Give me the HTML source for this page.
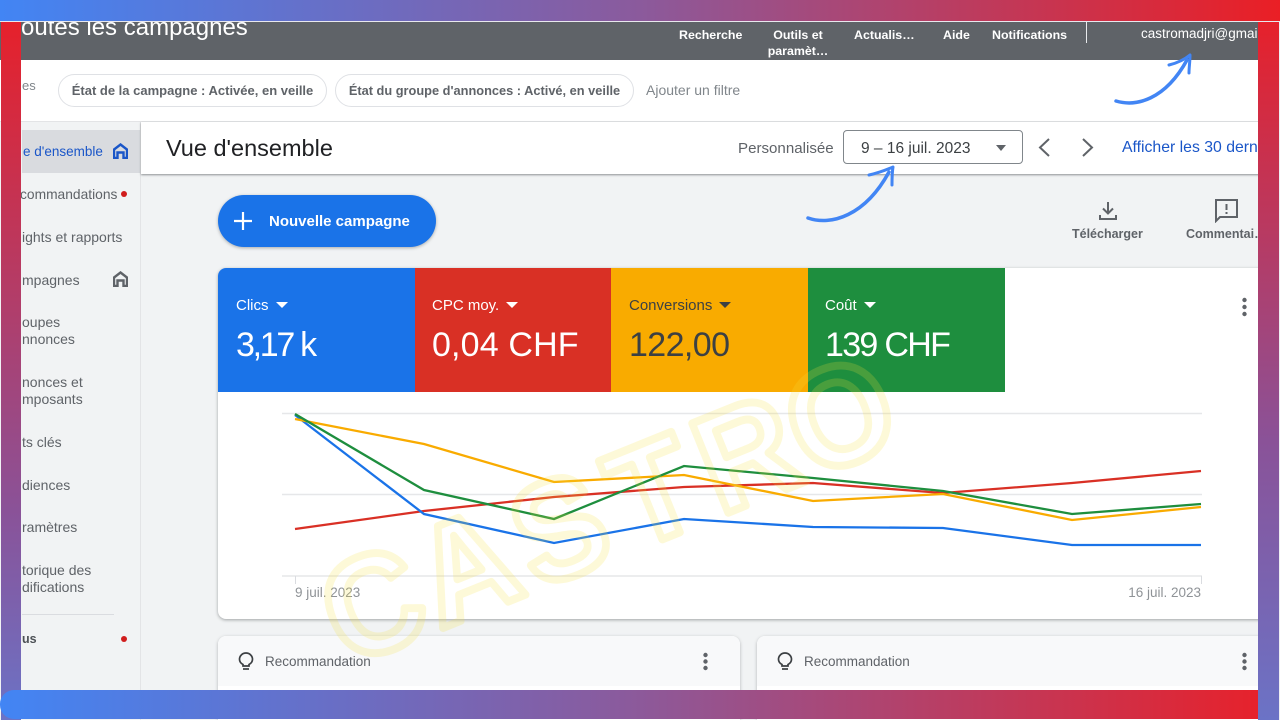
<!DOCTYPE html>
<html lang="fr"><head><meta charset="utf-8"><title>Vue d'ensemble</title>
<style>
html,body{margin:0;padding:0;width:1280px;height:720px;overflow:hidden;background:#fff}
body{position:relative;font-family:"Liberation Sans",sans-serif;color:#3c4043}
.a{position:absolute;white-space:nowrap}
.b{font-weight:bold}
.nav{font-size:14px;color:#5f6368;line-height:17px}
.hd{color:#fff;font-weight:bold;font-size:12.4px;line-height:16px;text-align:center}
.chip{position:absolute;top:74px;height:31px;border:1px solid #dfe1e5;border-radius:17px;background:#fff;font-size:13px;font-weight:bold;color:#5f6368;line-height:31px;text-align:center;white-space:nowrap}
.tile{position:absolute;top:268px;height:124px;width:197px}
.tl{position:absolute;left:18px;top:28.500px;font-size:15px;line-height:18px;white-space:nowrap}
.tv{position:absolute;left:18px;top:57px;font-size:34px;line-height:40px;white-space:nowrap}
.tri{display:inline-block;width:0;height:0;border-left:6px solid transparent;border-right:6px solid transparent;border-top:6px solid currentColor;margin-left:7px;vertical-align:2px}
</style></head><body>

<!-- header -->
<div class="a" style="left:0;top:21px;width:1280px;height:39px;background:#5f6368"></div>
<div class="a" style="left:9px;top:12px;font-size:24px;line-height:32px;color:#fff">Toutes les campagnes</div>
<div class="a hd" style="left:679px;top:27px">Recherche</div>
<div class="a hd" style="left:762px;top:27px;width:72px">Outils et<br>paramèt…</div>
<div class="a hd" style="left:854px;top:27px">Actualis…</div>
<div class="a hd" style="left:943px;top:27px">Aide</div>
<div class="a hd" style="left:992px;top:27px">Notifications</div>
<div class="a" style="left:1086px;top:21px;width:1px;height:22px;background:#e8eaed"></div>
<div class="a" style="left:1141px;top:26px;font-size:13.500px;line-height:16px;color:#fff">castromadjri@gmail.com</div>

<!-- filter bar -->
<div class="a" style="left:0;top:60px;width:1280px;height:61px;background:#fff;border-bottom:1px solid #e3e4e6"></div>
<div class="a" style="left:22px;top:78px;font-size:13px;color:#80868b">es</div>
<div class="chip" style="left:58px;width:267px">État de la campagne : Activée, en veille</div>
<div class="chip" style="left:335px;width:297px;font-size:12.800px">État du groupe d'annonces : Activé, en veille</div>
<div class="a" style="left:646px;top:82px;font-size:14px;color:#80868b">Ajouter un filtre</div>

<!-- sidebar -->
<div class="a" style="left:0;top:122px;width:140px;height:598px;background:#f1f3f4;border-right:1px solid #e3e4e6"></div>
<div class="a" style="left:22px;top:130px;width:118px;height:43px;background:#d9dbdf"></div>
<div class="a nav" style="left:23px;top:143px;color:#1a56c8;font-size:13.500px">e d'ensemble</div>
<svg class="a" style="left:113px;top:143px" width="15" height="16" viewBox="0 0 15 16"><path d="M7.500 1.500 14 6.500V15H10.500V9.500H4.500V15H1V6.500Z" fill="none" stroke="#1a56c8" stroke-width="2.400"/></svg>
<div class="a nav" style="left:20px;top:186px;width:98px;overflow:hidden;font-size:13.800px">commandations</div>
<div class="a" style="left:121px;top:191px;width:6px;height:6px;border-radius:50%;background:#d01c1c"></div>
<div class="a nav" style="left:22px;top:229px">ights et rapports</div>
<div class="a nav" style="left:22px;top:272px">mpagnes</div>
<svg class="a" style="left:113px;top:271px" width="15" height="16" viewBox="0 0 15 16"><path d="M7.500 1.500 14 6.500V15H10.500V9.500H4.500V15H1V6.500Z" fill="none" stroke="#5f6368" stroke-width="2.400"/></svg>
<div class="a nav" style="left:22px;top:314px">oupes<br>nnonces</div>
<div class="a nav" style="left:22px;top:374px">nonces et<br>mposants</div>
<div class="a nav" style="left:22px;top:434px">ts clés</div>
<div class="a nav" style="left:22px;top:477px">diences</div>
<div class="a nav" style="left:22px;top:519px">ramètres</div>
<div class="a nav" style="left:22px;top:562px">torique des<br>difications</div>
<div class="a" style="left:22px;top:614px;width:92px;height:1px;background:#dadce0"></div>
<div class="a nav b" style="left:22px;top:631px;font-size:12.500px;color:#4d5156">us</div>
<div class="a" style="left:121px;top:636px;width:6px;height:6px;border-radius:50%;background:#d01c1c"></div>

<!-- main -->
<div class="a" style="left:141px;top:122px;width:1139px;height:598px;background:#f1f3f4"></div>
<div class="a" style="left:141px;top:122px;width:1139px;height:52px;background:#fff;box-shadow:0 1px 2px rgba(60,64,67,.55)"></div>
<div class="a" style="left:166px;top:134px;font-size:23.500px;line-height:28px;color:#202124">Vue d'ensemble</div>
<div class="a" style="left:738px;top:140px;font-size:15.100px;color:#5f6368">Personnalisée</div>
<div class="a" style="left:843px;top:130px;width:178px;height:32px;border:1px solid #80868b;border-radius:4px;background:#fff"></div>
<div class="a" style="left:861px;top:140px;font-size:15.500px;color:#3c4043">9 – 16 juil. 2023</div>
<div class="a" style="left:996px;top:145px;width:0;height:0;border-left:5.500px solid transparent;border-right:5.500px solid transparent;border-top:6px solid #5f6368"></div>
<svg class="a" style="left:1035px;top:137px" width="64" height="21" viewBox="0 0 64 21"><path d="M14 2 5 10.500 14 19M48 2 57 10.500 48 19" fill="none" stroke="#5f6368" stroke-width="2"/></svg>
<div class="a" style="left:1122px;top:139px;font-size:15.800px;color:#1a56c8">Afficher les 30 derniers jours</div>

<!-- new campaign -->
<div class="a" style="left:218px;top:195px;width:218px;height:52px;border-radius:26px;background:#1a73e8;box-shadow:0 1px 3px rgba(60,64,67,.4)"></div>
<svg class="a" style="left:233px;top:211px" width="20" height="20" viewBox="0 0 20 20"><path d="M10 1V19M1 10H19" stroke="#fff" stroke-width="2.200"/></svg>
<div class="a b" style="left:269px;top:213px;font-size:15px;color:#fff">Nouvelle campagne</div>

<!-- download/comment -->
<svg class="a" style="left:1097px;top:200px" width="22" height="22" viewBox="0 0 22 22"><path d="M11 2V13M6 8.500 11 13.500 16 8.500M3 15V19H19V15" fill="none" stroke="#5f6368" stroke-width="2"/></svg>
<div class="a b" style="left:1072px;top:227px;font-size:12.500px;color:#5f6368">Télécharger</div>
<svg class="a" style="left:1214px;top:198px" width="25" height="25" viewBox="0 0 25 25"><path d="M2 2H23V19H6L2 23Z" fill="none" stroke="#5f6368" stroke-width="2"/><path d="M12.500 6V12M12.500 14V16" stroke="#5f6368" stroke-width="2"/></svg>
<div class="a b" style="left:1186px;top:227px;font-size:12.500px;color:#5f6368">Commentai…</div>

<!-- chart card -->
<div class="a" style="left:218px;top:268px;width:1062px;height:351px;background:#fff;border-radius:8px;box-shadow:0 1px 3px rgba(60,64,67,.45)"></div>
<div class="tile" style="left:218px;background:#1a73e8;color:#fff;border-top-left-radius:8px"><div class="tl">Clics<i class="tri"></i></div><div class="tv" style="letter-spacing:-2.300px">3,17 k</div></div>
<div class="tile" style="left:415px;width:196px;background:#d93025;color:#fff"><div class="tl" style="left:17px">CPC moy.<i class="tri"></i></div><div class="tv" style="left:17px;letter-spacing:.150px">0,04 CHF</div></div>
<div class="tile" style="left:611px;background:#f9ab00;color:#3c4043"><div class="tl">Conversions<i class="tri"></i></div><div class="tv" style="letter-spacing:-.600px">122,00</div></div>
<div class="tile" style="left:808px;background:#1e8e3e;color:#fff"><div class="tl" style="left:17px">Coût<i class="tri"></i></div><div class="tv" style="left:17px;letter-spacing:-1.700px">139 CHF</div></div>
<svg class="a" style="left:1241px;top:297px" width="7" height="20" viewBox="0 0 7 20"><circle cx="3.500" cy="3" r="2.200" fill="#5f6368"/><circle cx="3.500" cy="10" r="2.200" fill="#5f6368"/><circle cx="3.500" cy="17" r="2.200" fill="#5f6368"/></svg>

<!-- chart -->
<svg class="a" style="left:0;top:0" width="1280" height="720" viewBox="0 0 1280 720">
<path d="M282 413.500H1202M282 494.500H1202M282 576H1202" stroke="#e6e7e9" stroke-width="1.500" fill="none"/>
<path d="M295.500 576V584M1201.500 576V584" stroke="#dadce0"/>
<g fill="none" stroke-width="2.300">
<polyline stroke="#d93025" points="295,529 424,511 554,497 684,487 813,483 943,493 1072,483 1201,471"/>
<polyline stroke="#1a73e8" points="295,415 424,514 554,543 684,519 813,527 943,528 1072,545 1201,545"/>
<polyline stroke="#f9ab00" points="295,419 424,444 554,482 684,475 813,501 943,494 1072,520 1201,507"/>
<polyline stroke="#1e8e3e" points="295,414 424,490 554,519 684,466 813,478 943,491 1072,514 1201,504"/>
</g>
<text x="295" y="597" font-size="13.500" fill="#8f9397" font-family="Liberation Sans, sans-serif">9 juil. 2023</text>
<text x="1201" y="597" text-anchor="end" font-size="13.500" fill="#8f9397" font-family="Liberation Sans, sans-serif">16 juil. 2023</text>
</svg>

<!-- recommendation cards -->
<div class="a" style="left:218px;top:636px;width:522px;height:84px;background:#fff;border-radius:8px 8px 0 0;box-shadow:0 1px 3px rgba(60,64,67,.35)"></div>
<div class="a" style="left:218px;top:636px;width:522px;height:50px;background:#f8f9fa;border-radius:8px 8px 0 0"></div>
<div class="a" style="left:757px;top:636px;width:523px;height:84px;background:#fff;border-radius:8px 8px 0 0;box-shadow:0 1px 3px rgba(60,64,67,.35)"></div>
<div class="a" style="left:757px;top:636px;width:523px;height:50px;background:#f8f9fa;border-radius:8px 8px 0 0"></div>
<svg class="a" style="left:238px;top:652px" width="16" height="19" viewBox="0 0 16 19"><path d="M5 12.500C3 11.500 1.500 9.500 1.500 7.300A6.500 6.300 0 0 1 14.500 7.300C14.500 9.500 13 11.500 11 12.500V14H5Z" fill="none" stroke="#3c4043" stroke-width="1.700"/><path d="M5 17H11" stroke="#3c4043" stroke-width="1.700"/></svg>
<div class="a" style="left:265px;top:654px;font-size:13.500px;color:#5f6368">Recommandation</div>
<svg class="a" style="left:702px;top:652px" width="7" height="19" viewBox="0 0 7 19"><circle cx="3.500" cy="3" r="2.200" fill="#5f6368"/><circle cx="3.500" cy="9.500" r="2.200" fill="#5f6368"/><circle cx="3.500" cy="16" r="2.200" fill="#5f6368"/></svg>
<svg class="a" style="left:777px;top:652px" width="16" height="19" viewBox="0 0 16 19"><path d="M5 12.500C3 11.500 1.500 9.500 1.500 7.300A6.500 6.300 0 0 1 14.500 7.300C14.500 9.500 13 11.500 11 12.500V14H5Z" fill="none" stroke="#3c4043" stroke-width="1.700"/><path d="M5 17H11" stroke="#3c4043" stroke-width="1.700"/></svg>
<div class="a" style="left:804px;top:654px;font-size:13.500px;color:#5f6368">Recommandation</div>
<svg class="a" style="left:1241px;top:652px" width="7" height="19" viewBox="0 0 7 19"><circle cx="3.500" cy="3" r="2.200" fill="#5f6368"/><circle cx="3.500" cy="9.500" r="2.200" fill="#5f6368"/><circle cx="3.500" cy="16" r="2.200" fill="#5f6368"/></svg>

<!-- watermark -->
<svg class="a" style="left:0;top:0" width="1280" height="720" viewBox="0 0 1280 720">
<text transform="translate(391 649) rotate(-22) scale(.95 1)" font-size="140" font-weight="bold" font-family="Liberation Sans, sans-serif" fill="none" stroke="#f7e23c" stroke-opacity=".2" stroke-width="8" stroke-linejoin="round" text-anchor="middle" x="0 106 212 318 424 530" y="0">CASTRO</text>
</svg>

<!-- arrows -->
<svg class="a" style="left:0;top:0" width="1280" height="720" viewBox="0 0 1280 720" fill="none" stroke="#4285f4" stroke-linecap="round" stroke-linejoin="round">
<path d="M1116 101C1136 107 1165 100 1187 60" stroke-width="3.500"/>
<path d="M1169 65C1177 63 1184 60 1190 55C1190 62 1189 67 1189 73" stroke-width="3"/>
<path d="M808 218C831 226 865 216 889 172" stroke-width="3.500"/>
<path d="M869 175C878 173 886 170 893 167C892 173 892 179 892 185" stroke-width="3"/>
</svg>

<!-- frame -->
<div class="a" style="left:0;top:0;width:1280px;height:21px;background:linear-gradient(90deg,#4285f4 0,#8b5a9c 50%,#ea1f25 100%);border-bottom:1px solid #e8e8ee"></div>
<div class="a" style="left:1px;top:22px;width:20px;height:698px;background:linear-gradient(180deg,#e6212b 0,#8a5298 70%,#6b73c6 100%)"></div>
<div class="a" style="left:1258px;top:22px;width:21px;height:698px;background:linear-gradient(180deg,#e6212b 0,#8a5298 60%,#6b73c6 100%)"></div>
<div class="a" style="left:1279px;top:22px;width:1px;height:698px;background:#eeeef2"></div>
<div class="a" style="left:0;top:690px;width:1258px;height:29px;background:linear-gradient(90deg,#4285f4 0,#8b5a9c 50%,#e6222c 100%);border-radius:14px 0 0 14px"></div>
</body></html>
